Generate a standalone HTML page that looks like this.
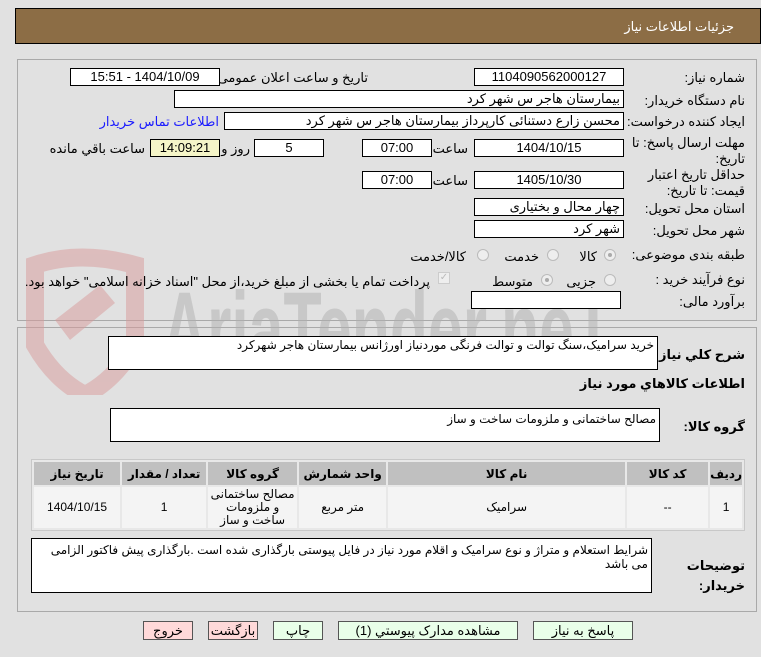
<!DOCTYPE html>
<html><head><meta charset="utf-8">
<style>
*{box-sizing:border-box;margin:0;padding:0}
body{width:761px;height:657px;background:#e1e1e1;font-family:"Liberation Sans","DejaVu Sans",sans-serif;font-size:12px;color:#000;position:relative;overflow:hidden;direction:rtl}
.a{position:absolute}
.box{position:absolute;background:#fff;border:1px solid #000;height:18px;line-height:16px;font-size:13px;padding:0 3px;white-space:nowrap;overflow:hidden}
.c{text-align:center}
.r{text-align:right}
.lbl{position:absolute;font-size:13px;white-space:nowrap;text-align:right}
.rad{position:absolute;width:12px;height:12px;border-radius:50%;border:1px solid #bbb;background:#eee}
.rad.on::after{content:"";position:absolute;left:3px;top:3px;width:4px;height:4px;border-radius:50%;background:#aaa}
.panel{position:absolute;border:1px solid #a9a9a9;background:#e1e1e1}
table{border-collapse:separate;border-spacing:2px;position:absolute;background:#e8e8e8;border:1px solid #c8c8c8}
th{background:#c0c0c0;height:23px;font-size:12px;font-weight:bold}
td{background:#f4f4f4;height:41px;text-align:center;font-size:12px;line-height:13px}
.btn{position:absolute;top:621px;height:19px;border:1px solid #555;font-size:13px;text-align:center;line-height:17px;background:#e9ffe9}
.pk{background:#ffd9d9}
</style></head><body>
<div class="a" style="left:15px;top:8px;width:746px;height:36px;background:#8c6d45;border:1px solid #000"></div>
<div class="lbl" style="right:27px;top:19px;color:#fff;font-size:13px">جزئیات اطلاعات نیاز</div>

<div class="panel" style="left:17px;top:59px;width:740px;height:262px"></div>
<div class="panel" style="left:17px;top:327px;width:740px;height:285px"></div>

<!-- watermark -->
<svg class="a" style="left:15px;top:245px" width="620" height="150" viewBox="0 0 620 150">
<g opacity="0.5">
<path d="M20 20 Q65 5 120 20 L120 100 Q100 135 70 150 Q40 135 20 100 Z" fill="none" stroke="#d99a9a" stroke-width="18"/>
<path d="M40 75 L85 40 L100 58 L55 95 Z" fill="#d99a9a"/>
<text x="147" y="120" font-size="105" font-weight="bold" fill="#b0b0b0" direction="ltr" font-family="Liberation Sans" textLength="450" lengthAdjust="spacingAndGlyphs">AriaTender.neT</text>
</g>
</svg>

<div class="lbl" style="right:16px;top:70px">شماره نیاز:</div>
<div class="box c" style="left:474px;top:68px;width:150px">1104090562000127</div>
<div class="lbl" style="right:393px;top:70px">تاریخ و ساعت اعلان عمومی:</div>
<div class="box c" style="left:70px;top:68px;width:150px">1404/10/09 - 15:51</div>

<div class="lbl" style="right:16px;top:93px">نام دستگاه خریدار:</div>
<div class="box r" style="left:174px;top:90px;width:450px">بیمارستان هاجر س  شهر کرد</div>

<div class="lbl" style="right:16px;top:114px">ایجاد کننده درخواست:</div>
<div class="box r" style="left:224px;top:112px;width:400px">محسن زارع دستنائی کارپرداز بیمارستان هاجر س  شهر کرد</div>
<div class="lbl" style="right:542px;top:114px;color:#1a1aff">اطلاعات تماس خریدار</div>

<div class="lbl" style="right:16px;top:135px;line-height:16px">مهلت ارسال پاسخ: تا<br>تاریخ:</div>
<div class="box c" style="left:474px;top:139px;width:150px">1404/10/15</div>
<div class="lbl" style="right:293px;top:141px">ساعت</div>
<div class="box c" style="left:362px;top:139px;width:70px">07:00</div>
<div class="box c" style="left:254px;top:139px;width:70px">5</div>
<div class="lbl" style="right:511px;top:141px">روز و</div>
<div class="box c" style="left:150px;top:139px;width:70px;background:#f5f5c8">14:09:21</div>
<div class="lbl" style="right:616px;top:141px">ساعت باقي مانده</div>

<div class="lbl" style="right:16px;top:167px;line-height:16px">حداقل تاریخ اعتبار<br>قیمت: تا تاریخ:</div>
<div class="box c" style="left:474px;top:171px;width:150px">1405/10/30</div>
<div class="lbl" style="right:293px;top:173px">ساعت</div>
<div class="box c" style="left:362px;top:171px;width:70px">07:00</div>

<div class="lbl" style="right:16px;top:201px">استان محل تحویل:</div>
<div class="box r" style="left:474px;top:198px;width:150px">چهار محال و بختیاری</div>
<div class="lbl" style="right:16px;top:223px">شهر محل تحویل:</div>
<div class="box r" style="left:474px;top:220px;width:150px">شهر کرد</div>

<div class="lbl" style="right:16px;top:247px">طبقه بندی موضوعی:</div>
<div class="rad on" style="left:604px;top:249px"></div><div class="lbl" style="right:164px;top:249px">کالا</div>
<div class="rad" style="left:547px;top:249px"></div><div class="lbl" style="right:222px;top:249px">خدمت</div>
<div class="rad" style="left:477px;top:249px"></div><div class="lbl" style="right:295px;top:249px">کالا/خدمت</div>

<div class="lbl" style="right:16px;top:272px">نوع فرآیند خرید :</div>
<div class="rad" style="left:604px;top:274px"></div><div class="lbl" style="right:165px;top:274px">جزیی</div>
<div class="rad on" style="left:541px;top:274px"></div><div class="lbl" style="right:228px;top:274px">متوسط</div>
<div class="a" style="left:438px;top:272px;width:12px;height:12px;border:1px solid #ccc;background:#eee;color:#bbb;font-size:10px;line-height:10px;text-align:center">✓</div>
<div class="lbl" style="right:331px;top:274px">پرداخت تمام یا بخشی از مبلغ خرید،از محل "اسناد خزانه اسلامی" خواهد بود.</div>

<div class="lbl" style="right:16px;top:294px">برآورد مالی:</div>
<div class="box" style="left:471px;top:291px;width:150px"></div>

<div class="lbl" style="right:16px;top:347px;font-weight:bold">شرح كلي نياز:</div>
<div class="box r" style="left:108px;top:336px;width:550px;height:34px;font-size:12px">خرید سرامیک،سنگ توالت و توالت فرنگی موردنیاز اورژانس بیمارستان هاجر شهرکرد</div>
<div class="lbl" style="right:16px;top:376px;font-weight:bold">اطلاعات كالاهاي مورد نياز</div>
<div class="lbl" style="right:16px;top:419px;font-weight:bold">گروه کالا:</div>
<div class="box r" style="left:110px;top:408px;width:550px;height:34px;padding-top:2px;font-size:12px">مصالح ساختمانی و ملزومات ساخت و ساز</div>

<table style="left:31px;top:459px;width:714px">
<tr><th style="width:27px">ردیف</th><th style="width:81px">کد کالا</th><th style="width:237px">نام کالا</th><th style="width:87px">واحد شمارش</th><th style="width:89px">گروه کالا</th><th style="width:84px">تعداد / مقدار</th><th>تاریخ نیاز</th></tr>
<tr><td>1</td><td>--</td><td>سرامیک</td><td>متر مربع</td><td>مصالح ساختمانی و ملزومات ساخت و ساز</td><td>1</td><td>1404/10/15</td></tr>
</table>

<div class="lbl" style="right:16px;top:556px;font-weight:bold;line-height:20px">توضیحات<br>خریدار:</div>
<div class="box r" style="left:31px;top:538px;width:621px;height:55px;white-space:normal;line-height:14px;font-size:12px;padding-top:4px">شرایط استعلام و متراژ و نوع سرامیک و اقلام مورد نیاز در فایل پیوستی بارگذاری شده است .بارگذاری پیش فاکتور الزامی می باشد</div>

<div class="btn" style="left:533px;width:100px">پاسخ به نیاز</div>
<div class="btn" style="left:338px;width:180px">مشاهده مدارک پیوستي (1)</div>
<div class="btn" style="left:273px;width:50px">چاپ</div>
<div class="btn pk" style="left:208px;width:50px">بازگشت</div>
<div class="btn pk" style="left:143px;width:50px">خروج</div>
</body></html>
